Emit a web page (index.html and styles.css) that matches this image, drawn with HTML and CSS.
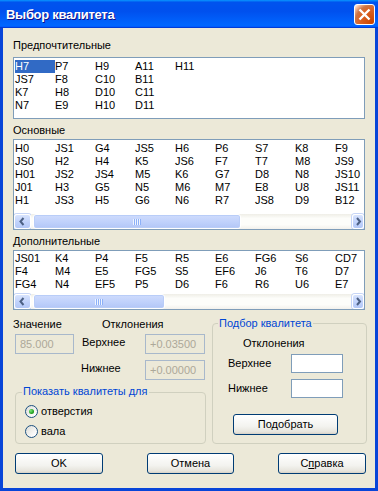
FILE: index.html
```html
<!DOCTYPE html>
<html lang="ru">
<head>
    <meta charset="UTF-8">
    <title>Выбор квалитета</title>
    <link rel="stylesheet" href="styles.css">
</head>
<body>
    <div class="window">
        <div class="titlebar">
            <span class="title">Выбор квалитета</span>
            <button class="close" type="button">
                <svg width="19" height="19" viewBox="0 0 19 19">
                    <path d="M4.5 4.5 L14.5 14.5 M14.5 4.5 L4.5 14.5" stroke="#fff" stroke-width="2.4" fill="none"/>
                </svg>
            </button>
        </div>
        <div class="body">
            <div class="caption caption-first">Предпочтительные</div>
            <div class="listbox listbox-pref">
                <div class="items rows-4">
                    <span class="sel">H7</span><span>JS7</span><span>K7</span><span>N7</span>
                    <span>P7</span><span>F8</span><span>H8</span><span>E9</span>
                    <span>H9</span><span>C10</span><span>D10</span><span>H10</span>
                    <span>A11</span><span>B11</span><span>C11</span><span>D11</span>
                    <span>H11</span>
                </div>
            </div>

            <div class="caption">Основные</div>
            <div class="listbox listbox-main">
                <div class="items rows-5">
                    <span>H0</span><span>JS0</span><span>H01</span><span>J01</span><span>H1</span>
                    <span>JS1</span><span>H2</span><span>JS2</span><span>H3</span><span>JS3</span>
                    <span>G4</span><span>H4</span><span>JS4</span><span>G5</span><span>H5</span>
                    <span>JS5</span><span>K5</span><span>M5</span><span>N5</span><span>G6</span>
                    <span>H6</span><span>JS6</span><span>K6</span><span>M6</span><span>N6</span>
                    <span>P6</span><span>F7</span><span>G7</span><span>M7</span><span>R7</span>
                    <span>S7</span><span>T7</span><span>D8</span><span>E8</span><span>JS8</span>
                    <span>K8</span><span>M8</span><span>N8</span><span>U8</span><span>D9</span>
                    <span>F9</span><span>JS9</span><span>JS10</span><span>JS11</span><span>B12</span>
                </div>
                <div class="hscroll">
                    <span class="arrow arrow-left">
                        <svg width="15" height="13" viewBox="0 0 15 13"><path d="M8.5 3 L5.5 6.5 L8.5 10" stroke="#4D6185" stroke-width="2" fill="none"/></svg>
                    </span>
                    <span class="track"><span class="thumb thumb-main"><span class="grip"></span></span></span>
                    <span class="arrow arrow-right">
                        <svg width="10" height="13" viewBox="0 0 10 13"><path d="M4 3 L7 6.5 L4 10" stroke="#4D6185" stroke-width="2" fill="none"/></svg>
                    </span>
                </div>
            </div>

            <div class="caption">Дополнительные</div>
            <div class="listbox listbox-extra">
                <div class="items rows-3">
                    <span>JS01</span><span>F4</span><span>FG4</span>
                    <span>K4</span><span>M4</span><span>N4</span>
                    <span>P4</span><span>E5</span><span>EF5</span>
                    <span>F5</span><span>FG5</span><span>P5</span>
                    <span>R5</span><span>S5</span><span>D6</span>
                    <span>E6</span><span>EF6</span><span>F6</span>
                    <span>FG6</span><span>J6</span><span>R6</span>
                    <span>S6</span><span>T6</span><span>U6</span>
                    <span>CD7</span><span>D7</span><span>E7</span>
                </div>
                <div class="hscroll">
                    <span class="arrow arrow-left">
                        <svg width="15" height="13" viewBox="0 0 15 13"><path d="M8.5 3 L5.5 6.5 L8.5 10" stroke="#4D6185" stroke-width="2" fill="none"/></svg>
                    </span>
                    <span class="track"><span class="thumb thumb-extra"><span class="grip"></span></span></span>
                    <span class="arrow arrow-right">
                        <svg width="10" height="13" viewBox="0 0 10 13"><path d="M4 3 L7 6.5 L4 10" stroke="#4D6185" stroke-width="2" fill="none"/></svg>
                    </span>
                </div>
            </div>

            <div class="bottom">
                <div class="left">
                    <div class="vhead">
                        <span class="vhead-value">Значение</span>
                        <span>Отклонения</span>
                    </div>
                    <div class="vrow vrow-first">
                        <input class="field field-value" type="text" value="85.000" disabled>
                        <span class="vlabel">Верхнее</span>
                        <input class="field field-dev" type="text" value="+0.03500" disabled>
                    </div>
                    <div class="vrow vrow-second">
                        <span class="vspacer"></span>
                        <span class="vlabel">Нижнее</span>
                        <input class="field field-dev" type="text" value="+0.00000" disabled>
                    </div>

                    <div class="group group-show">
                        <span class="group-title">Показать квалитеты для</span>
                        <label class="radio-row radio-first">
                            <span class="radio checked"><span class="dot"></span></span>
                            <span>отверстия</span>
                        </label>
                        <label class="radio-row radio-second">
                            <span class="radio"></span>
                            <span>вала</span>
                        </label>
                    </div>
                </div>

                <div class="group group-pick">
                    <span class="group-title">Подбор квалитета</span>
                    <div class="pick-head">Отклонения</div>
                    <div class="pick-row pick-first">
                        <span class="pick-label">Верхнее</span>
                        <input class="field field-pick" type="text">
                    </div>
                    <div class="pick-row pick-second">
                        <span class="pick-label">Нижнее</span>
                        <input class="field field-pick" type="text">
                    </div>
                    <button class="btn btn-pick" type="button">Подобрать</button>
                </div>
            </div>

            <div class="actions">
                <button class="btn btn-ok" type="button">OK</button>
                <button class="btn btn-cancel" type="button">Отмена</button>
                <button class="btn btn-help" type="button">С<u>п</u>равка</button>
            </div>
        </div>
    </div>
</body>
</html>
```

FILE: styles.css
```css
body {
    margin: 0;
    font-family: "Liberation Sans", Arial, sans-serif;
    font-size: 11px;
    line-height: 13px;
    color: #000;
    background: #fff;
}
.window {
    width: 378px;
    height: 491px;
    display: flex;
    flex-direction: column;
}
.titlebar {
    height: 28px;
    flex: none;
    box-sizing: border-box;
    display: flex;
    justify-content: space-between;
    align-items: flex-start;
    padding: 0 3px 0 6px;
    background: linear-gradient(to bottom, #0997ff, #0053ee 8%, #0050ee 40%, #0066ff 88%, #0066ff 93%, #005bff 95%, #003dd7 96%, #003dd7);
}
.title {
    margin-top: 7px;
    font-size: 13px;
    line-height: 16px;
    font-weight: bold;
    letter-spacing: -0.3px;
    color: #fff;
    text-shadow: 1px 1px #0f1089;
}
.close {
    margin-top: 4px;
    width: 21px;
    height: 21px;
    padding: 0;
    box-sizing: border-box;
    border: 1px solid #fff;
    border-radius: 3px;
    display: flex;
    align-items: center;
    justify-content: center;
    background: radial-gradient(circle at 90% 90%, #cc4600 0%, #dc6527 55%, #cd7546 70%, #ffccb2 90%, #fff 100%);
}
.close svg {
    display: block;
}
.body {
    flex: 1;
    background: #ece9d8;
    border: 3px solid #0845d8;
    border-top: 0;
    padding: 11px 10px 0;
}

/* lists */
.caption {
    margin: 5px 0 2px;
}
.caption-first {
    margin: 0 0 5px;
}
.listbox {
    box-sizing: border-box;
    background: #fff;
    border: 1px solid #7f9db9;
    overflow: hidden;
    display: flex;
    flex-direction: column;
}
.listbox-pref {
    height: 62px;
    padding-top: 2px;
}
.listbox-main {
    height: 91px;
    padding-top: 2px;
}
.listbox-extra {
    height: 60px;
    padding-top: 1px;
}
.items {
    display: grid;
    grid-auto-flow: column;
    grid-auto-columns: 40px;
    padding-left: 1px;
    white-space: nowrap;
}
.rows-3 {
    grid-template-rows: repeat(3, 13px);
}
.rows-4 {
    grid-template-rows: repeat(4, 13px);
}
.rows-5 {
    grid-template-rows: repeat(5, 13px);
}
.items .sel {
    background: #316ac5;
    color: #fff;
}
.hscroll {
    margin-top: auto;
    height: 15px;
    flex: none;
    display: flex;
}
.arrow {
    box-sizing: border-box;
    display: flex;
    align-items: center;
    justify-content: center;
    border: 1px solid #fff;
    border-radius: 3px;
    background: linear-gradient(to bottom, #d7e3fd, #bfd1fb 60%, #b3c8f7);
    box-shadow: 0 0 0 1px #c6d5f7;
}
.arrow-left {
    width: 17px;
}
.arrow-right {
    width: 12px;
}
.track {
    flex: 1;
    display: flex;
    padding-left: 2px;
    background: linear-gradient(to bottom, #efeee7, #fdfdfa 30%, #fdfdfa 70%, #f3f1ec);
}
.thumb {
    box-sizing: border-box;
    display: flex;
    align-items: center;
    justify-content: center;
    border: 1px solid #fff;
    border-radius: 3px;
    background: linear-gradient(to bottom, #cfdcfd, #bed0fb 60%, #b2c6f6);
    box-shadow: inset 0 0 0 1px #b9cdf8;
}
.thumb-main {
    width: 208px;
}
.thumb-extra {
    width: 132px;
}
.grip {
    width: 8px;
    height: 6px;
    background: repeating-linear-gradient(to right, #eef4fe 0 1px, #8cb0f8 1px 2px);
}

/* bottom part */
.bottom {
    margin-top: 8px;
    display: flex;
    align-items: flex-start;
}
.left {
    width: 192px;
}
.vhead {
    display: flex;
    height: 13px;
}
.vhead-value {
    width: 89px;
}
.vrow {
    display: flex;
    align-items: flex-start;
    height: 20px;
}
.vrow-first {
    margin-top: 3px;
}
.vrow-second {
    margin-top: 6px;
}
.vspacer {
    width: 69px;
}
.vlabel {
    width: 65px;
    padding-top: 2px;
}
.field {
    box-sizing: border-box;
    margin: 0;
    height: 20px;
    padding: 0 4px;
    border: 1px solid #7f9db9;
    background: #fff;
    font: inherit;
    color: #000;
    outline: none;
}
.field:disabled {
    background: #ece9d8;
    border-color: #a8b8cb;
    color: #aca899;
}
.field-value {
    width: 59px;
    margin: 0 8px 0 2px;
}
.field-dev {
    width: 60px;
}
.group {
    box-sizing: border-box;
    border: 1px solid #d0d0bf;
    border-radius: 4px;
    display: flex;
    flex-direction: column;
    align-items: flex-start;
}
.group-title {
    background: #ece9d8;
    color: #0046d5;
    padding: 0 1px;
    line-height: 13px;
}
.group-show {
    margin: 12px 0 0 2px;
    width: 191px;
    padding: 0 0 5px 9px;
}
.group-show .group-title {
    margin: -8px 0 0 -3px;
}
.radio-row {
    display: flex;
    align-items: center;
    height: 13px;
    gap: 3px;
}
.radio-first {
    margin-top: 7px;
}
.radio-second {
    margin-top: 7px;
}
.radio {
    box-sizing: border-box;
    width: 13px;
    height: 13px;
    border: 1px solid #1c5180;
    border-radius: 50%;
    background: linear-gradient(135deg, #dcdcd7 0%, #fff 85%);
    display: flex;
    align-items: center;
    justify-content: center;
}
.dot {
    width: 5px;
    height: 5px;
    border-radius: 50%;
    background: radial-gradient(circle at 35% 35%, #7de67d, #21a121 60%, #1b861b);
}
.group-pick {
    margin: 5px -2px 0 7px;
    width: 155px;
    padding-bottom: 8px;
}
.group-pick .group-title {
    margin: -7px 0 0 5px;
}
.pick-head {
    margin: 7px 0 0 30px;
}
.pick-row {
    display: flex;
    align-items: flex-start;
}
.pick-first {
    margin-top: 4px;
}
.pick-second {
    margin-top: 6px;
}
.pick-label {
    width: 63px;
    padding: 3px 0 0 15px;
}
.field-pick {
    width: 52px;
    height: 19px;
}

/* buttons */
.btn {
    box-sizing: border-box;
    height: 21px;
    padding: 0;
    border: 1px solid #003c74;
    border-radius: 3px;
    background: linear-gradient(to bottom, #fff, #f3f3ef 60%, #e6e4dc 90%, #d6d0c5);
    font: inherit;
    color: #000;
}
.btn-pick {
    width: 105px;
    margin: 16px 0 0 20px;
}
.actions {
    margin: 9px -1px 0 2px;
    display: flex;
    justify-content: space-between;
}
.btn-ok,
.btn-help {
    width: 88px;
}
.btn-cancel {
    width: 87px;
}
```
